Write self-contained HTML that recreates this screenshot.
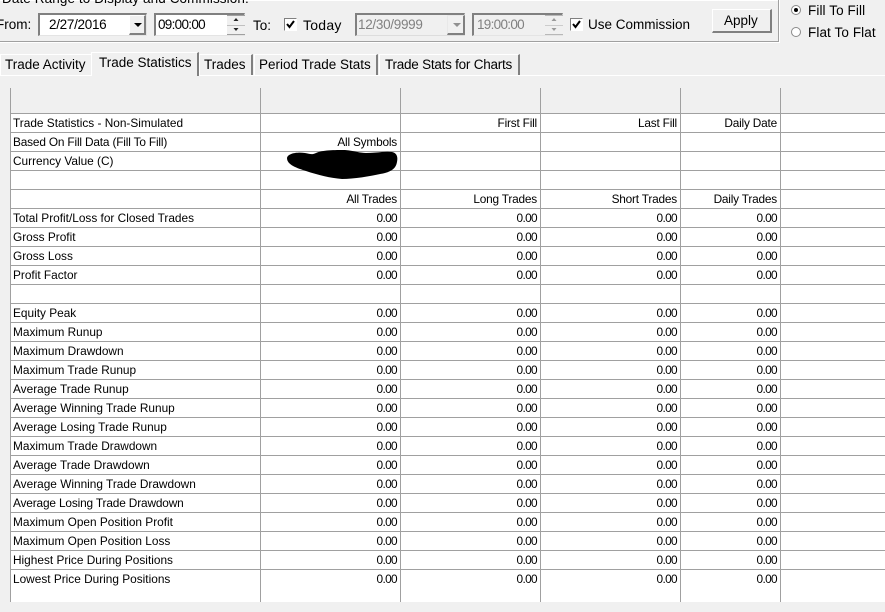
<!DOCTYPE html>
<html><head><meta charset="utf-8">
<style>
html,body{margin:0;padding:0;}
body{width:885px;height:612px;overflow:hidden;background:#f0f0f0;position:relative;font-family:"Liberation Sans",sans-serif;color:#000;}
.a{position:absolute;white-space:nowrap;}
.t{font-size:13.5px;line-height:16px;}
.sunk{position:absolute;box-sizing:border-box;background:#fff;border-top:2px solid #808080;border-left:2px solid #808080;border-right:1px solid #e4e4e4;border-bottom:1px solid #e4e4e4;}
.dis{background:#f0f0f0;}
.btn{position:absolute;box-sizing:border-box;background:#f0f0f0;border-top:1px solid #fff;border-left:1px solid #fff;border-right:2px solid #808080;border-bottom:2px solid #808080;}
.cb{position:absolute;width:13px;height:13px;box-sizing:border-box;background:#fff;border-top:1px solid #808080;border-left:1px solid #808080;border-right:1px solid #fff;border-bottom:1px solid #fff;}
.tab{position:absolute;top:54px;height:21px;box-sizing:border-box;border-left:1px solid #fff;border-top:1px solid #fff;border-right:2px solid #808080;}
table{position:absolute;left:10px;top:88px;border-collapse:collapse;table-layout:fixed;width:875px;font-size:11.85px;}
td{height:17px;padding:1px 3px 0 2px;border-right:1px solid #a0a0a0;border-bottom:1px solid #a0a0a0;background:#fff;text-align:right;white-space:nowrap;overflow:hidden;line-height:16px;vertical-align:top;box-sizing:content-box;letter-spacing:-.2px;}
td:first-child{text-align:left;border-left:1px solid #a0a0a0;padding-left:2px;letter-spacing:0;}
td:last-child{border-right:0;}
tr.h td{background:#f0f0f0;height:24px;}
tr.b td{border-bottom:0;height:31px;}
tr.n td:not(:first-child){letter-spacing:-.65px;}
tr.s td:first-child{letter-spacing:-.15px;}
</style></head><body>
<div class="a" style="left:0;top:0;width:778px;height:1px;background:#fff"></div>
<div class="a" style="left:0;top:41px;width:779px;height:1px;background:#a0a0a0"></div>
<div class="a" style="left:0;top:42px;width:779px;height:1px;background:#fff"></div>
<div class="a" style="left:778px;top:0;width:1px;height:42px;background:#a0a0a0"></div>
<div class="a" style="left:779px;top:0;width:1px;height:43px;background:#fff"></div>
<div class="a t" style="left:2px;top:-9px;letter-spacing:.1px">Date Range to Display and Commission:</div>
<div class="a t" style="left:-4px;top:17px">From:</div>

<div class="sunk" style="left:38px;top:13px;width:109px;height:23px"></div>
<div class="a t" style="left:49px;top:17px;letter-spacing:-.3px">2/27/2016</div>
<div class="btn" style="left:129px;top:15px;width:17px;height:20px"></div>
<svg class="a" style="left:133px;top:22px" width="10" height="6"><path d="M1 1h8L5 5z" fill="#000"/></svg>

<div class="sunk" style="left:154px;top:13px;width:91px;height:23px"></div>
<div class="a t" style="left:158px;top:17px;letter-spacing:-.7px">09:00:00</div>
<div class="a" style="left:227px;top:15px;width:18px;height:20px;background:#f0f0f0;border-top:1px solid #a0a0a0;border-bottom:1px solid #a0a0a0;box-sizing:border-box"></div>
<div class="a" style="left:227px;top:25px;width:18px;height:1px;background:#c0c0c0"></div>
<svg class="a" style="left:233px;top:18px" width="6" height="14"><path d="M3 0L5.500 3H.5zM.5 10h5L3 13z" fill="#222"/></svg>

<div class="a t" style="left:253px;top:18px">To:</div>
<div class="cb" style="left:284px;top:18px"></div>
<svg class="a" style="left:284px;top:18px" width="13" height="13"><path d="M3 6l2.500 3L10 3" fill="none" stroke="#000" stroke-width="2"/></svg>
<div class="a t" style="left:303px;top:17px;font-size:14px;letter-spacing:.25px">Today</div>

<div class="sunk dis" style="left:355px;top:13px;width:110px;height:23px;border-right-color:#ddd;border-bottom-color:#ddd"></div>
<div class="a t" style="left:358px;top:17px;color:#808080;letter-spacing:-.3px">12/30/9999</div>
<div class="btn" style="left:447px;top:15px;width:18px;height:20px;border-top-color:#e8e8e8;border-left-color:#e8e8e8"></div>
<svg class="a" style="left:452px;top:22px" width="10" height="6"><path d="M1 1h8L5 5z" fill="#909090"/></svg>

<div class="sunk dis" style="left:472px;top:13px;width:91px;height:23px"></div>
<div class="a t" style="left:477px;top:17px;color:#808080;letter-spacing:-.7px">19:00:00</div>
<div class="a" style="left:545px;top:15px;width:18px;height:20px;background:#f0f0f0;border-top:1px solid #b8b8b8;border-bottom:1px solid #b8b8b8;box-sizing:border-box"></div>
<div class="a" style="left:545px;top:25px;width:18px;height:1px;background:#ccc"></div>
<svg class="a" style="left:551px;top:18px" width="6" height="14"><path d="M3 0L5.500 3H.5zM.5 10h5L3 13z" fill="#999"/></svg>

<div class="cb" style="left:570px;top:18px"></div>
<svg class="a" style="left:570px;top:18px" width="13" height="13"><path d="M3 6l2.500 3L10 3" fill="none" stroke="#000" stroke-width="2"/></svg>
<div class="a t" style="left:588px;top:17px">Use Commission</div>

<div class="btn" style="left:712px;top:9px;width:60px;height:24px"></div>
<div class="a t" style="left:724px;top:13px">Apply</div>

<svg class="a" style="left:790px;top:3px" width="14" height="36"><circle cx="6" cy="7" r="4.500" fill="#fff" stroke="#8a8a8a"/><circle cx="6" cy="7" r="2" fill="#000"/><circle cx="6" cy="29" r="4.500" fill="#fff" stroke="#8a8a8a"/></svg>
<div class="a t" style="left:808px;top:3px;letter-spacing:.1px">Fill To Fill</div>
<div class="a t" style="left:808px;top:25px;letter-spacing:.1px">Flat To Flat</div>

<div class="a" style="left:0;top:75px;width:885px;height:1px;background:#fff"></div>
<div class="tab" style="left:0;width:92px;border-right:0"></div>
<div class="a t" style="left:5px;top:57px">Trade Activity</div>
<div class="tab" style="left:91px;top:52px;width:108px;height:24px;background:#f0f0f0"></div>
<div class="a t" style="left:99px;top:55px">Trade Statistics</div>
<div class="tab" style="left:199px;width:54px"></div>
<div class="a t" style="left:204px;top:57px">Trades</div>
<div class="tab" style="left:254px;width:124px"></div>
<div class="a t" style="left:259px;top:57px">Period Trade Stats</div>
<div class="tab" style="left:379px;width:141px"></div>
<div class="a t" style="left:385px;top:57px;letter-spacing:-.24px">Trade Stats for Charts</div>

<table>
<colgroup><col style="width:250px"><col style="width:140px"><col style="width:140px"><col style="width:140px"><col style="width:100px"><col></colgroup>
<tr class="h"><td></td><td></td><td></td><td></td><td></td><td></td></tr>
<tr><td>Trade Statistics - Non-Simulated</td><td></td><td>First Fill</td><td>Last Fill</td><td>Daily Date</td><td></td></tr>
<tr><td style="letter-spacing:-.17px">Based On Fill Data (Fill To Fill)</td><td>All Symbols</td><td></td><td></td><td></td><td></td></tr>
<tr><td>Currency Value (C)</td><td></td><td></td><td></td><td></td><td></td></tr>
<tr><td></td><td></td><td></td><td></td><td></td><td></td></tr>
<tr><td></td><td>All Trades</td><td>Long Trades</td><td>Short Trades</td><td>Daily Trades</td><td></td></tr>
<tr class="n"><td>Total Profit/Loss for Closed Trades</td><td>0.00</td><td>0.00</td><td>0.00</td><td>0.00</td><td></td></tr>
<tr class="n"><td>Gross Profit</td><td>0.00</td><td>0.00</td><td>0.00</td><td>0.00</td><td></td></tr>
<tr class="n"><td>Gross Loss</td><td>0.00</td><td>0.00</td><td>0.00</td><td>0.00</td><td></td></tr>
<tr class="n"><td>Profit Factor</td><td>0.00</td><td>0.00</td><td>0.00</td><td>0.00</td><td></td></tr>
<tr><td></td><td></td><td></td><td></td><td></td><td></td></tr>
<tr class="n"><td>Equity Peak</td><td>0.00</td><td>0.00</td><td>0.00</td><td>0.00</td><td></td></tr>
<tr class="n"><td>Maximum Runup</td><td>0.00</td><td>0.00</td><td>0.00</td><td>0.00</td><td></td></tr>
<tr class="n"><td>Maximum Drawdown</td><td>0.00</td><td>0.00</td><td>0.00</td><td>0.00</td><td></td></tr>
<tr class="n"><td>Maximum Trade Runup</td><td>0.00</td><td>0.00</td><td>0.00</td><td>0.00</td><td></td></tr>
<tr class="n"><td>Average Trade Runup</td><td>0.00</td><td>0.00</td><td>0.00</td><td>0.00</td><td></td></tr>
<tr class="n"><td>Average Winning Trade Runup</td><td>0.00</td><td>0.00</td><td>0.00</td><td>0.00</td><td></td></tr>
<tr class="n"><td>Average Losing Trade Runup</td><td>0.00</td><td>0.00</td><td>0.00</td><td>0.00</td><td></td></tr>
<tr class="n"><td>Maximum Trade Drawdown</td><td>0.00</td><td>0.00</td><td>0.00</td><td>0.00</td><td></td></tr>
<tr class="n"><td>Average Trade Drawdown</td><td>0.00</td><td>0.00</td><td>0.00</td><td>0.00</td><td></td></tr>
<tr class="n"><td>Average Winning Trade Drawdown</td><td>0.00</td><td>0.00</td><td>0.00</td><td>0.00</td><td></td></tr>
<tr class="n s"><td>Average Losing Trade Drawdown</td><td>0.00</td><td>0.00</td><td>0.00</td><td>0.00</td><td></td></tr>
<tr class="n"><td>Maximum Open Position Profit</td><td>0.00</td><td>0.00</td><td>0.00</td><td>0.00</td><td></td></tr>
<tr class="n"><td>Maximum Open Position Loss</td><td>0.00</td><td>0.00</td><td>0.00</td><td>0.00</td><td></td></tr>
<tr class="n"><td>Highest Price During Positions</td><td>0.00</td><td>0.00</td><td>0.00</td><td>0.00</td><td></td></tr>
<tr class="b n"><td>Lowest Price During Positions</td><td>0.00</td><td>0.00</td><td>0.00</td><td>0.00</td><td></td></tr>
</table>
<svg class="a" style="left:0;top:0" width="885" height="612"><path d="M287 158C288 153 298 152 305 153C310 154 312 155 316 153C322 150 335 150 345 150C355 151 360 153 366 153C376 153 385 151 392 152C397 153 398 157 397 162C396 168 392 171 385 173C372 176 355 179 342 179C330 178 318 175 306 171C297 168 287 165 287 158Z" fill="#000"/></svg>
</body></html>
